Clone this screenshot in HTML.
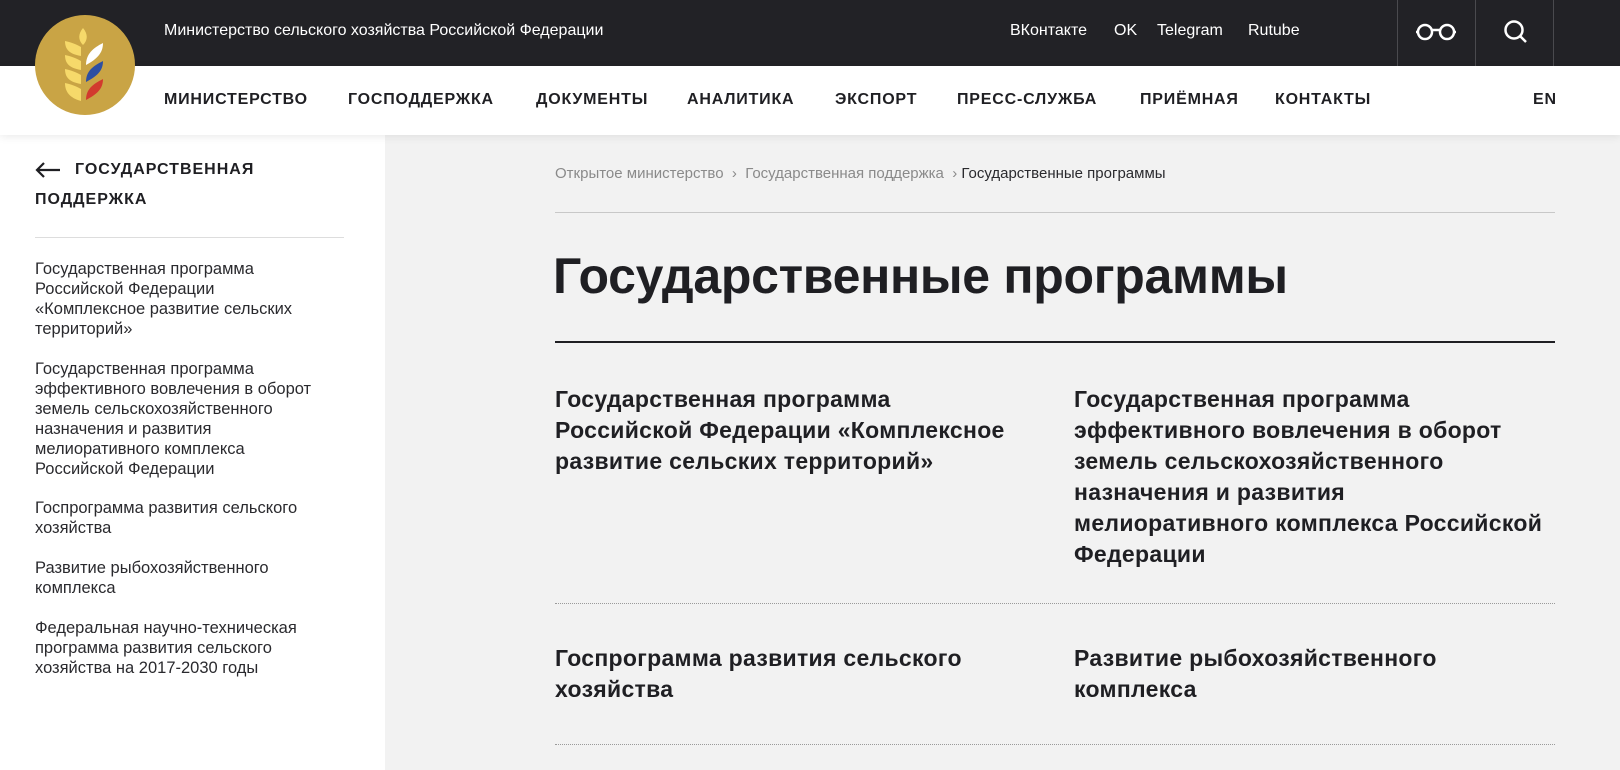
<!DOCTYPE html>
<html><head><meta charset="utf-8">
<style>
*{margin:0;padding:0;box-sizing:border-box}
body{width:1620px;height:770px;overflow:hidden;background:#f2f2f2;font-family:"Liberation Sans",sans-serif;color:#1f1f23;position:relative}
.a{position:absolute;white-space:nowrap}
.top{position:absolute;left:0;top:0;width:1620px;height:66px;background:#222226}
.nav{position:absolute;left:0;top:66px;width:1620px;height:69px;background:#fff;box-shadow:0 2px 8px rgba(0,0,0,.08);z-index:2}
.side{position:absolute;left:0;top:135px;width:385px;height:635px;background:#fff}
.n{font-weight:bold;font-size:16px;letter-spacing:.8px;color:#1f1f23}
.s{color:#fff;font-size:16px;top:22px}
.dv{position:absolute;top:0;width:1px;height:66px;background:#4a4a4e}
.li{position:absolute;left:35px;font-size:16.5px;line-height:20px;color:#2a2a2e;white-space:nowrap}
.ct{position:absolute;font-weight:bold;font-size:23px;line-height:31px;color:#1f1f23;letter-spacing:.3px;white-space:nowrap}
.dot{position:absolute;left:555px;width:1000px;border-top:1px dotted #9a9a9a}
</style></head><body>
<div class="top">
<div class="a" style="left:164px;top:22px;color:#fff;font-size:16px">Министерство сельского хозяйства Российской Федерации</div>
<div class="a s" style="left:1010px">ВКонтакте</div>
<div class="a s" style="left:1114px">OK</div>
<div class="a s" style="left:1157px">Telegram</div>
<div class="a s" style="left:1248px">Rutube</div>
<div class="dv" style="left:1397px"></div>
<div class="dv" style="left:1475px"></div>
<div class="dv" style="left:1553px"></div>
<svg class="a" style="left:1415px;top:21px" width="42" height="22" viewBox="0 0 42 22"><g fill="none" stroke="#fff" stroke-width="2.5"><circle cx="10" cy="11" r="7"/><circle cx="32" cy="11" r="7"/><path d="M17 9h8M3 11H1M39 11h2"/></g></svg>
<svg class="a" style="left:1503px;top:19px" width="26" height="26" viewBox="0 0 26 26"><g fill="none" stroke="#fff" stroke-width="2.5"><circle cx="11" cy="11" r="8.5"/><path d="M17 17l6 6"/></g></svg>
</div>
<div class="nav">
<div class="a n" style="left:164px;top:25px">МИНИСТЕРСТВО</div>
<div class="a n" style="left:348px;top:25px">ГОСПОДДЕРЖКА</div>
<div class="a n" style="left:536px;top:25px">ДОКУМЕНТЫ</div>
<div class="a n" style="left:687px;top:25px">АНАЛИТИКА</div>
<div class="a n" style="left:835px;top:25px">ЭКСПОРТ</div>
<div class="a n" style="left:957px;top:25px">ПРЕСС-СЛУЖБА</div>
<div class="a n" style="left:1140px;top:25px">ПРИЁМНАЯ</div>
<div class="a n" style="left:1275px;top:25px">КОНТАКТЫ</div>
<div class="a n" style="left:1533px;top:25px">EN</div>
</div>
<svg class="a" style="left:34px;top:14px;z-index:3" width="102" height="102" viewBox="0 0 102 102">
<circle cx="51" cy="51" r="50" fill="#c9a445"/>
<path d="M49 14c-5 6-5 12 0 17c5-5 5-11 0-17z" fill="#f6d96a"/>
<path d="M47 33c-7-4-12-5-16-6c0 9 5 13 16 15z" fill="#f6d96a"/>
<path d="M47 47c-7-4-12-5-16-6c0 9 5 13 16 15z" fill="#f6d96a"/>
<path d="M47 61c-7-4-12-5-16-6c0 9 5 13 16 15z" fill="#f6d96a"/>
<path d="M47 75c-7-4-12-5-16-6c0 9 5 15 16 18z" fill="#f6d96a"/>
<path d="M52 51c0-11 7-17 17-22c0 10-6 16-17 22z" fill="#fff"/>
<path d="M52 68c0-11 7-16 17-21c0 10-6 15-17 21z" fill="#2d4fa3"/>
<path d="M52 86c0-11 7-16 17-21c0 10-6 15-17 21z" fill="#d23a2e"/>
</svg>
<div class="side">
<svg class="a" style="left:35px;top:27px" width="26" height="16" viewBox="0 0 26 16"><path d="M25 8H3M9 1L2 8l7 7" fill="none" stroke="#1f1f23" stroke-width="2.2"/></svg>
<div class="a" style="left:75px;top:26px;font-weight:bold;font-size:16px;letter-spacing:1px">ГОСУДАРСТВЕННАЯ</div>
<div class="a" style="left:35px;top:56px;font-weight:bold;font-size:16px;letter-spacing:1px">ПОДДЕРЖКА</div>
<div class="a" style="left:35px;top:102px;width:309px;border-top:1px solid #ddd"></div>
<div class="li" style="top:124px">Государственная программа<br>Российской Федерации<br>«Комплексное развитие сельских<br>территорий»</div>
<div class="li" style="top:224px">Государственная программа<br>эффективного вовлечения в оборот<br>земель сельскохозяйственного<br>назначения и развития<br>мелиоративного комплекса<br>Российской Федерации</div>
<div class="li" style="top:363px">Госпрограмма развития сельского<br>хозяйства</div>
<div class="li" style="top:423px">Развитие рыбохозяйственного<br>комплекса</div>
<div class="li" style="top:483px">Федеральная научно-техническая<br>программа развития сельского<br>хозяйства на 2017-2030 годы</div>
</div>
<div class="a" style="left:555px;top:165px;font-size:15px;color:#8a8a8a">Открытое министерство&nbsp;&nbsp;›&nbsp;&nbsp;Государственная поддержка&nbsp;&nbsp;›&nbsp;<span style="color:#2a2a2e">Государственные программы</span></div>
<div class="a" style="left:555px;top:212px;width:1000px;border-top:1px solid #c8c8c8"></div>
<div class="a" style="left:553px;top:247px;font-weight:bold;font-size:50px;letter-spacing:-.3px;color:#1f1f23">Государственные программы</div>
<div class="a" style="left:555px;top:341px;width:1000px;border-top:2px solid #1f1f23"></div>
<div class="ct" style="left:555px;top:384px">Государственная программа<br>Российской Федерации «Комплексное<br>развитие сельских территорий»</div>
<div class="ct" style="left:1074px;top:384px">Государственная программа<br>эффективного вовлечения в оборот<br>земель сельскохозяйственного<br>назначения и развития<br>мелиоративного комплекса Российской<br>Федерации</div>
<div class="dot" style="top:603px"></div>
<div class="ct" style="left:555px;top:643px">Госпрограмма развития сельского<br>хозяйства</div>
<div class="ct" style="left:1074px;top:643px">Развитие рыбохозяйственного<br>комплекса</div>
<div class="dot" style="top:744px"></div>
</body></html>
